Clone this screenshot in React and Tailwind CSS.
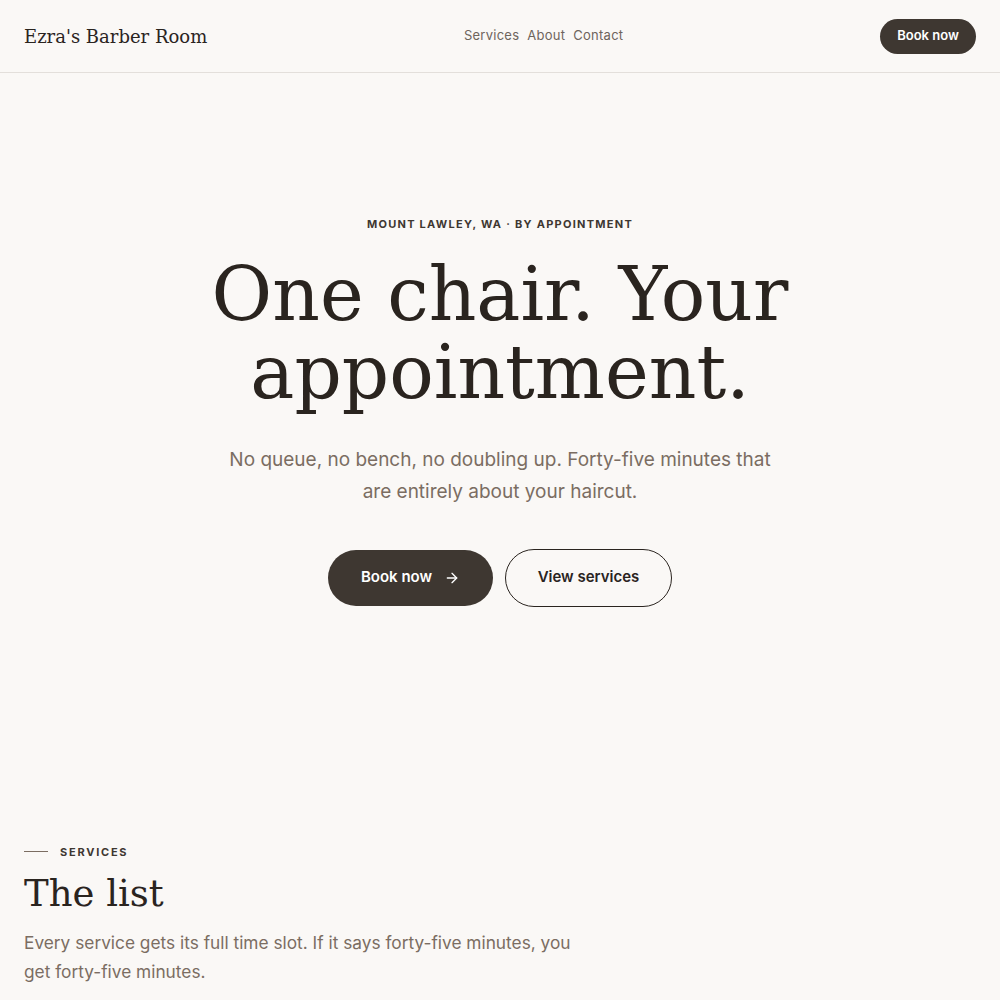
import { ArrowRight } from "lucide-react";

const serif = "font-['DejaVu_Serif',serif]";

export default function App() {
  return (
    <div className="min-h-screen bg-[#faf8f6] font-['Inter',sans-serif] text-[#2a241f]">
      {/* header */}
      <header className="flex h-[73px] items-center justify-between border-b border-[#e3dfdb] px-6">
        <a className={`${serif} text-[18px] text-[#2a241f]`}>Ezra's Barber Room</a>
        <nav className="flex gap-2 text-[13px] tracking-[0.02em] text-[#6e645c]">
          <a>Services</a>
          <a>About</a>
          <a>Contact</a>
        </nav>
        <button className="h-[35px] w-[96px] rounded-full bg-[#3e3731] text-[13px] font-semibold text-white">
          Book now
        </button>
      </header>

      {/* hero */}
      <section className="flex flex-col items-center px-6 pt-[143px] text-center">
        <p className="text-[11px] font-bold tracking-[0.115em] text-[#3e3731]">
          MOUNT LAWLEY, WA · BY APPOINTMENT
        </p>
        <h1 className={`${serif} mt-[22px] text-[74px] leading-[78px] text-[#2a241f]`}>
          One chair. Your
          <br />
          appointment.
        </h1>
        <p className="mt-[33px] max-w-[556px] text-[19px] leading-[32px] text-[#7b6d62]">
          No queue, no bench, no doubling up. Forty-five minutes that are entirely about your haircut.
        </p>
        <div className="mt-[41px] flex items-center gap-3">
          <button className="flex h-[56px] w-[165px] items-center justify-center gap-3 rounded-full bg-[#3e3731] text-[15px] font-semibold text-white">
            Book now
            <ArrowRight size={16} strokeWidth={2} />
          </button>
          <button className="h-[58px] w-[167px] rounded-full border border-[#2a241f] text-[15px] font-semibold text-[#2a241f]">
            View services
          </button>
        </div>
      </section>

      {/* services */}
      <section className="px-6 pt-[237px] pb-10">
        <div className="flex items-center gap-3">
          <span className="h-px w-6 bg-[#7b6d62]" />
          <span className="text-[11px] font-bold tracking-[0.16em] text-[#3e3731]">SERVICES</span>
        </div>
        <h2 className={`${serif} mt-[10px] text-[37px] leading-[48px] text-[#2a241f]`}>The list</h2>
        <p className="mt-[10px] max-w-[560px] text-[17.3px] leading-[29px] text-[#7b6d62]">
          Every service gets its full time slot. If it says forty-five minutes, you get forty-five minutes.
        </p>
      </section>
    </div>
  );
}
